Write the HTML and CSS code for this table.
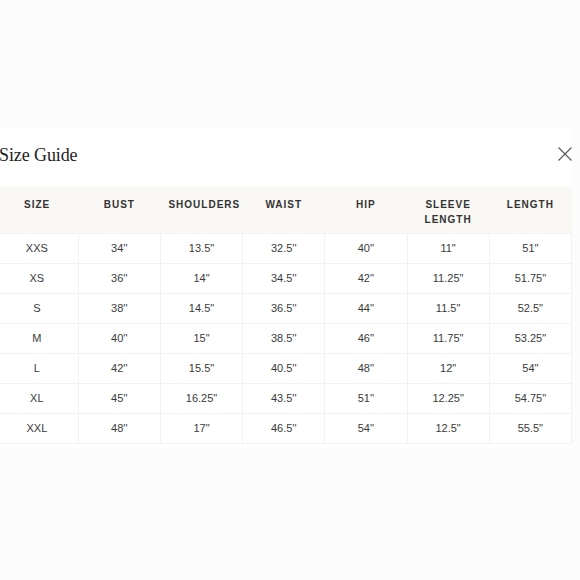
FILE: index.html
```html
<!DOCTYPE html>
<html>
<head>
<meta charset="utf-8">
<link rel="stylesheet" href="styles.css">
</head>
<body>
<div class="backdrop-top"></div>
<div class="modal">
  <div class="modal-head">
    <h2 class="title">Size Guide</h2>
    <svg class="close" width="14" height="14" viewBox="0 0 14 14"><path d="M0.5 0.5L13.5 13.5M13.5 0.5L0.5 13.5" stroke="#555" stroke-width="1.1" fill="none"/></svg>
  </div>
  <table class="sizes">
    <thead>
      <tr><th>SIZE</th><th>BUST</th><th>SHOULDERS</th><th>WAIST</th><th>HIP</th><th>SLEEVE LENGTH</th><th>LENGTH</th></tr>
    </thead>
    <tbody>
      <tr><td>XXS</td><td>34''</td><td>13.5"</td><td>32.5''</td><td>40''</td><td>11"</td><td>51"</td></tr>
      <tr><td>XS</td><td>36''</td><td>14"</td><td>34.5''</td><td>42''</td><td>11.25"</td><td>51.75"</td></tr>
      <tr><td>S</td><td>38''</td><td>14.5"</td><td>36.5''</td><td>44''</td><td>11.5"</td><td>52.5"</td></tr>
      <tr><td>M</td><td>40''</td><td>15"</td><td>38.5''</td><td>46''</td><td>11.75"</td><td>53.25"</td></tr>
      <tr><td>L</td><td>42''</td><td>15.5"</td><td>40.5''</td><td>48''</td><td>12"</td><td>54"</td></tr>
      <tr><td>XL</td><td>45''</td><td>16.25"</td><td>43.5''</td><td>51''</td><td>12.25"</td><td>54.75"</td></tr>
      <tr><td>XXL</td><td>48''</td><td>17"</td><td>46.5''</td><td>54''</td><td>12.5"</td><td>55.5"</td></tr>
    </tbody>
  </table>
</div>
</body>
</html>
```
FILE: styles.css
```css
html, body {
  margin: 0;
  padding: 0;
}
body {
  background: #fcfcfc;
  width: 580px;
  height: 580px;
  overflow: hidden;
  font-family: "Liberation Sans", Arial, sans-serif;
  color: #333;
}
.backdrop-top {
  height: 128px;
}
.modal {
  background: #fff;
  margin-left: -4px;
  width: 576px;
  padding-bottom: 4px;
}
.modal-head {
  display: flex;
  justify-content: space-between;
  align-items: flex-start;
  height: 59px;
  box-sizing: border-box;
  padding-left: 3px;
}
.title {
  margin: 17px 0 0;
  font-family: "Liberation Serif", "Times New Roman", serif;
  font-weight: normal;
  font-size: 18px;
  line-height: 21px;
  color: #222;
  letter-spacing: -0.1px;
}
.close {
  margin-top: 19px;
  display: block;
}
.sizes {
  width: 576px;
  border-collapse: collapse;
  table-layout: fixed;
}
.sizes thead tr {
  background: #f9f8f4;
}
.sizes th {
  height: 46px;
  box-sizing: border-box;
  vertical-align: top;
  padding: 10px 8px 0;
  font-size: 10px;
  line-height: 15px;
  font-weight: bold;
  letter-spacing: 1px;
  color: #333;
  text-align: center;
}
.sizes td {
  height: 29px;
  padding: 0;
  text-align: center;
  vertical-align: middle;
  font-size: 11px;
  color: #3a3a3a;
  border: 1px solid #f3f2ee;
}
.sizes td:first-child {
  border-left: none;
}
```
